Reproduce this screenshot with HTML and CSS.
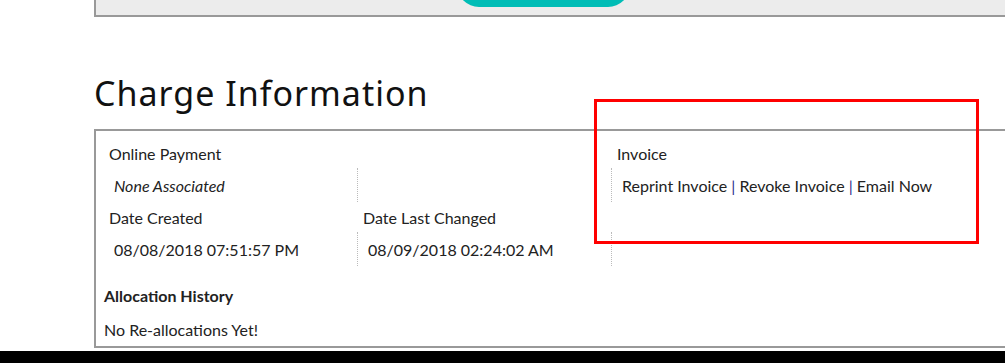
FILE: index.html
```html
<!DOCTYPE html>
<html lang="en">
<head>
    <meta charset="UTF-8">
    <title>Charge Information</title>
    <link rel="stylesheet" href="styles.css">
</head>
<body>

    <div class="page">
        <!-- Panel above (cut off) -->
        <div class="top-panel">
            <div class="top-button"></div>
        </div>

        <h1 class="section-title">Charge Information</h1>

        <!-- Charge details -->
        <div class="charge-box">
            <div class="field-grid">
                <div class="label">Online Payment</div>
                <div class="label"></div>
                <div class="label">Invoice</div>

                <div class="value sep"><em>None Associated</em></div>
                <div class="value sep"></div>
                <div class="value">
                    <a href="#">Reprint Invoice</a> <span class="pipe">|</span>
                    <a href="#">Revoke Invoice</a> <span class="pipe">|</span>
                    <a href="#">Email Now</a>
                </div>

                <div class="label">Date Created</div>
                <div class="label">Date Last Changed</div>
                <div class="label"></div>

                <div class="value sep">08/08/2018 07:51:57 PM</div>
                <div class="value sep">08/09/2018 02:24:02 AM</div>
                <div class="value"></div>
            </div>

            <div class="history-title">Allocation History</div>
            <div class="history-text">No Re-allocations Yet!</div>
        </div>
    </div>

    <div class="bottom-bar"></div>

    <!-- Highlight annotation -->
    <div class="highlight"></div>

</body>
</html>
```

FILE: styles.css
```css
/* Global Styles */
body {
    margin: 0;
    width: 1005px;
    height: 363px;
    overflow: hidden;
    position: relative;
    background: #fff;
    font-family: Lato, "Open Sans", sans-serif;
    font-size: 16px;
    color: #222;
}

.page {
    padding-left: 94px;
    margin-right: -30px;
}

/* Panel above */
.top-panel {
    height: 15px;
    background: #ececec;
    border-left: 2px solid #999;
    border-bottom: 2px solid #999;
    overflow: hidden;
}

.top-button {
    width: 173px;
    height: 44px;
    margin-top: -37px;
    margin-left: 361px;
    background: #00bdb6;
    border-radius: 22px;
}

/* Heading */
.section-title {
    margin: 56px 0 16px;
    font-family: "Noto Sans", sans-serif;
    font-weight: 400;
    font-size: 34px;
    line-height: 40px;
    letter-spacing: 1px;
    color: #111;
}

/* Charge box */
.charge-box {
    border: 2px solid #999;
    border-right: none;
    padding: 7px 8px 7px 8px;
}

.field-grid {
    display: grid;
    grid-template-columns: 254px 254px 1fr;
}

.label {
    padding: 7px 0 5px 5px;
    line-height: 18px;
    min-height: 18px;
}

.value {
    padding: 8px 0 6px 10px;
    line-height: 20px;
    min-height: 20px;
}

.value.sep {
    border-right: 1px dotted #bbb;
}

.value a {
    color: #222;
    text-decoration: none;
}

.pipe {
    color: #2b2b8c;
}

/* Allocation history */
.history-title {
    margin-top: 21px;
    font-weight: 700;
    line-height: 18px;
}

.history-text {
    margin-top: 16px;
    line-height: 18px;
}

.bottom-bar {
    margin-top: 3px;
    height: 12px;
    background: #000;
}

/* Annotation */
.highlight {
    position: absolute;
    left: 594px;
    top: 99px;
    width: 379px;
    height: 139px;
    border: 3px solid #f00;
}
```
